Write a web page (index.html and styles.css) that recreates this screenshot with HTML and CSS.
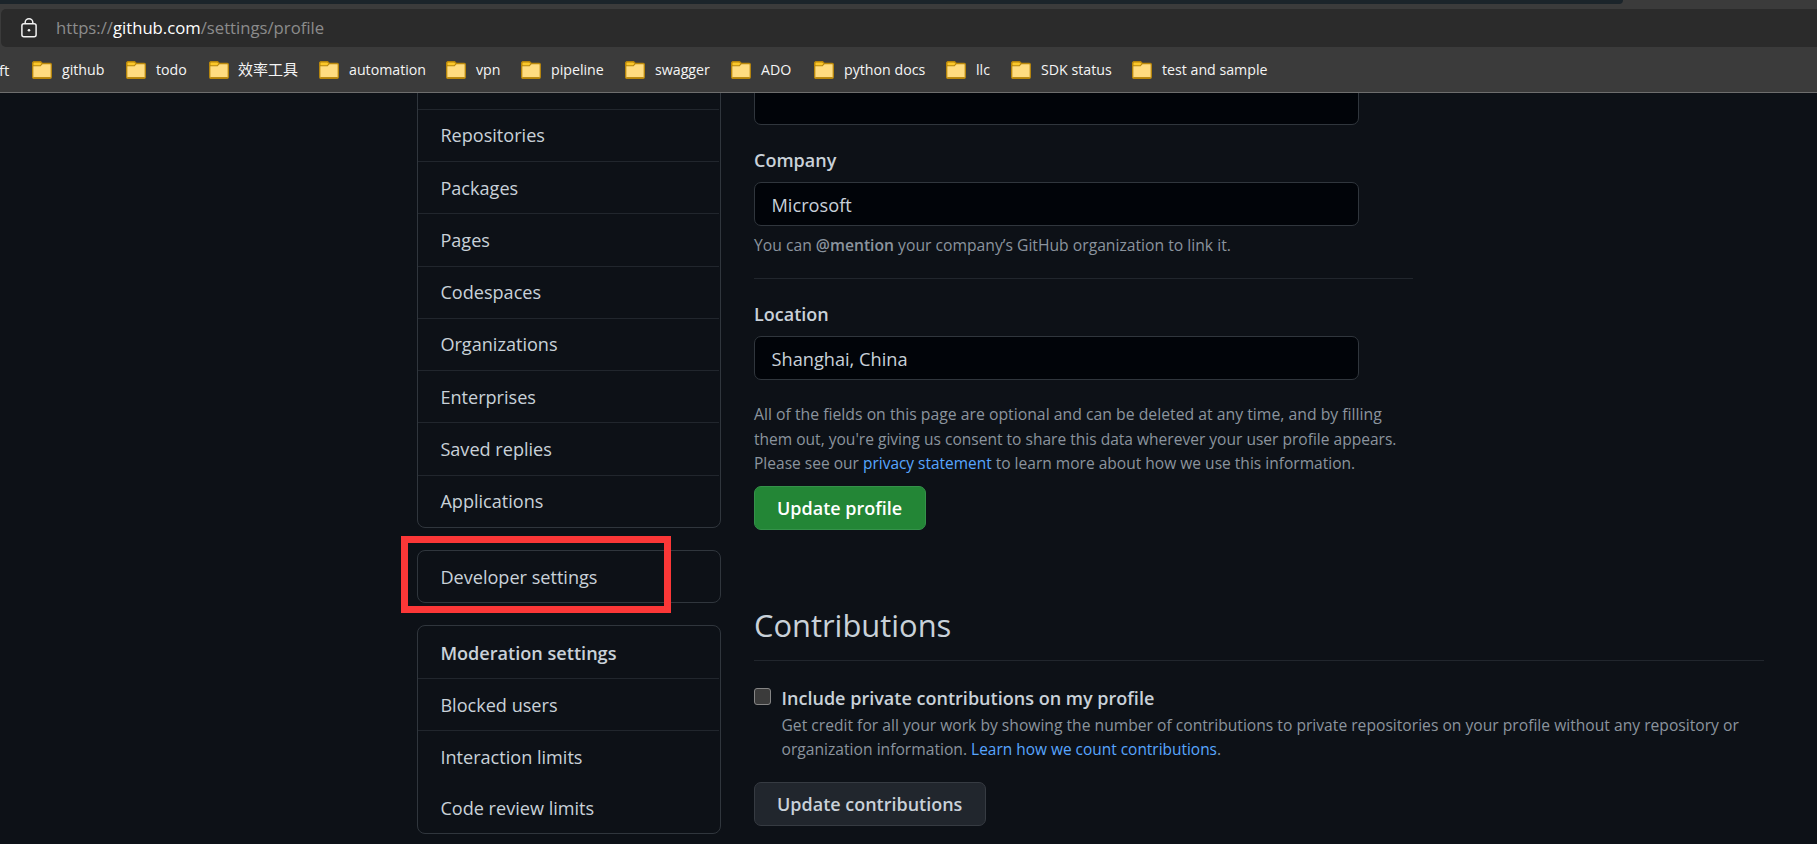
FILE: index.html
```
<!DOCTYPE html>
<html lang="en">
<head>
<meta charset="utf-8">
<title>Your profile</title>
<link rel="stylesheet" href="styles.css">
</head>
<body>
<svg width="0" height="0" class="defs">
  <symbol id="folder" viewBox="0 0 20 18">
    <path d="M1 1.5 2 .7H8.5L10.3 2.5H18.3Q19.3 2.5 19.3 3.5V16Q19.3 17.3 18 17.3H2Q.7 17.3.7 16V2Z" fill="#ffdc80" stroke="#b8860b" stroke-width="1.3"/>
    <path d="M.9 1.6Q1.1.9 2 .9H8.4L10.2 2.6 8.4 4.8H.9Z" fill="#fcc829" stroke="#b8860b" stroke-width="1.1"/>
    <path d="M1.5 16.8H18.5" stroke="#b8860b" stroke-width="1.4"/>
  </symbol>
</svg>
<header class="browser">
  <div class="tabs"><div class="tabs-strip"></div></div>
  <div class="address">
    <svg class="lock" width="16" height="20" viewBox="0 0 16 20" fill="none" stroke="#f2f2f2" stroke-width="1.5">
      <rect x=".9" y="5.8" width="14.2" height="12.9" rx="2"/>
      <path d="M4.2 5.6V4.3a3.8 3.5 0 0 1 7.6 0v1.3"/>
      <circle cx="8" cy="12.3" r="1.3" fill="#f2f2f2" stroke="none"/>
    </svg>
    <div class="url"><span class="scheme">https://</span><span class="host">github.com</span><span class="path">/settings/profile</span></div>
  </div>
  <nav class="bookmarks">
    <span class="cut">oft</span>
    <span class="bm"><svg><use href="#folder"/></svg>github</span>
    <span class="bm"><svg><use href="#folder"/></svg>todo</span>
    <span class="bm"><svg><use href="#folder"/></svg><span class="cjk">效率工具</span></span>
    <span class="bm"><svg><use href="#folder"/></svg>automation</span>
    <span class="bm"><svg><use href="#folder"/></svg>vpn</span>
    <span class="bm"><svg><use href="#folder"/></svg>pipeline</span>
    <span class="bm"><svg><use href="#folder"/></svg>swagger</span>
    <span class="bm"><svg><use href="#folder"/></svg>ADO</span>
    <span class="bm"><svg><use href="#folder"/></svg>python docs</span>
    <span class="bm"><svg><use href="#folder"/></svg>llc</span>
    <span class="bm"><svg><use href="#folder"/></svg>SDK status</span>
    <span class="bm"><svg><use href="#folder"/></svg>test and sample</span>
  </nav>
</header>
<div class="page">
  <aside class="sidebar">
    <nav class="menu menu-account">
      <a class="first">Account security</a>
      <a>Repositories</a>
      <a>Packages</a>
      <a>Pages</a>
      <a>Codespaces</a>
      <a>Organizations</a>
      <a>Enterprises</a>
      <a>Saved replies</a>
      <a>Applications</a>
    </nav>
    <nav class="menu menu-dev">
      <a>Developer settings</a>
      <div class="highlight"></div>
    </nav>
    <nav class="menu menu-mod">
      <a class="heading">Moderation settings</a>
      <a>Blocked users</a>
      <a>Interaction limits</a>
      <a class="plain">Code review limits</a>
    </nav>
  </aside>
  <main class="content">
    <div class="field field-cut"></div>
    <label class="label">Company</label>
    <div class="field">Microsoft</div>
    <p class="note mention">You can <b>@mention</b> your company’s GitHub organization to link it.</p>
    <div class="rule"></div>
    <label class="label location">Location</label>
    <div class="field">Shanghai, China</div>
    <p class="note consent">
      <span class="l1">All of the fields on this page are optional and can be deleted at any time, and by filling</span>
      <span class="l2">them out, you're giving us consent to share this data wherever your user profile appears.</span>
      <span class="l3">Please see our <a>privacy statement</a> to learn more about how we use this information.</span>
    </p>
    <button class="btn primary">Update profile</button>
    <h2>Contributions</h2>
    <div class="option">
      <span class="checkbox"></span>
      <div>
        <div class="option-title">Include private contributions on my profile</div>
        <p class="note">Get credit for all your work by showing the number of contributions to private repositories on your profile without any repository or<br>organization information. <a>Learn how we count contributions</a>.</p>
      </div>
    </div>
    <button class="btn secondary">Update contributions</button>
  </main>
</div>
</body>
</html>
```
FILE: styles.css
```
* { box-sizing: border-box; }
body {
  margin: 0;
  height: 844px;
  overflow: hidden;
  display: flex;
  flex-direction: column;
  background: #0d1117;
  color: #c9d1d9;
  font-family: "Open Sans", "Noto Sans CJK SC", sans-serif;
}
.defs { display: block; flex: none; }

.browser {
  flex: none;
  height: 93px;
  background: #3b3b3b;
  border-bottom: 1px solid #6e6e6e;
}
.tabs { height: 9px; }
.tabs-strip { width: 1623px; height: 4px; background: #1b242a; border-bottom-right-radius: 4px; }
.address {
  height: 38px;
  margin-left: 1px;
  padding-left: 20px;
  display: flex;
  align-items: center;
  background: #2b2b2b;
  border-radius: 5px 0 0 5px;
}
.lock { margin-right: 19px; margin-top: -1px; }
.url { font-size: 16.7px; line-height: 24px; color: #8c8c8c; white-space: nowrap; }
.host { color: #fff; }
.bookmarks {
  display: grid;
  grid-template-columns: 32px 94px 83px 110px 127px 75px 104px 106px 83px 132px 65px 121px 150px;
  height: 45px;
  align-items: center;
  font-size: 14.2px;
  color: #f5f5f5;
  white-space: nowrap;
}
.cut { margin-left: -10px; font-size: 15px; }
.bm { display: flex; align-items: center; gap: 10px; }
.bm svg { width: 20px; height: 18px; flex: none; }
.cjk { font-size: 15px; line-height: 20px; margin: -2px 0 0 -1px; }

.page { flex: 1; min-height: 0; overflow: hidden; display: flex; padding-left: 417px; gap: 33px; }

.sidebar { width: 304px; flex: none; font-size: 18.1px; }
.menu {
  position: relative;
  border: 1px solid #30363d;
  border-radius: 8px;
  margin-bottom: 22px;
}
.menu a {
  display: flex;
  align-items: center;
  height: 52.25px;
  padding: 0 0 0 22.4px;
  margin-right: 1px;
  border-top: 1px solid #21262d;
}
.menu a:first-child { border-top-color: transparent; }
.menu-account { height: 472.5px; margin-top: -37.5px; }
.menu a.first { padding-bottom: 3px; }
.menu-dev a { height: 51px; }
.menu-mod a:first-child { height: 52px; }
.menu a.heading { font-weight: 600; }
.menu a.plain { height: 50px; padding-bottom: 0; border-top: 0; }
.highlight {
  position: absolute;
  left: -17px;
  top: -15px;
  width: 270px;
  height: 77px;
  border: 7px solid #fb3737;
}

.content { width: 1010px; }
.field {
  width: 605px;
  height: 44px;
  padding: 1px 0 0 16.5px;
  display: flex;
  align-items: center;
  background: #010409;
  border: 1px solid #30363d;
  border-radius: 7px;
  font-size: 18.2px;
}
.field-cut { margin-top: -12px; }
.label { display: block; margin: 21px 0 8px; font-size: 18px; line-height: 28px; font-weight: 600; }
.note { margin: 0; font-size: 15.7px; line-height: 24.4px; color: #8b949e; white-space: nowrap; }
.note a { color: #58a6ff; font-size: 15.45px; }
.note b { font-weight: 600; }
.mention { margin-top: 7px; }
.rule { width: 659px; height: 1px; margin-top: 21px; background: #21262d; }
.location { margin-top: 21px; }
.consent { margin-top: 22px; }
.consent span { display: block; }
.l1 { font-size: 15.79px; }
.l2, .l3 { font-size: 15.55px; }
.btn {
  display: block;
  height: 44px;
  padding: 1px 23px 0 22px;
  border: 1px solid #363b42;
  border-radius: 7px;
  background: #21262d;
  color: #c9d1d9;
  font: 600 17.98px/30px "Open Sans", sans-serif;
}
.primary { margin-top: 10px; background: #238636; border-color: #35924a; color: #fff; }
.secondary { padding-top: 0; padding-bottom: 1px; }
h2 {
  margin: 69px 0 27px;
  height: 62px;
  border-bottom: 1px solid #21262d;
  font-size: 30.9px;
  line-height: 52px;
  font-weight: 400;
}
.option { display: flex; gap: 10.5px; margin-bottom: 21px; }
.option .note { margin-top: 3px; font-size: 15.65px; }
.checkbox {
  width: 17px;
  height: 17px;
  border: 1px solid #858585;
  border-radius: 3px;
  background: #3b3b3b;
}
.option-title { margin-top: -2px; font-size: 18.04px; line-height: 24px; font-weight: 600; }
```
